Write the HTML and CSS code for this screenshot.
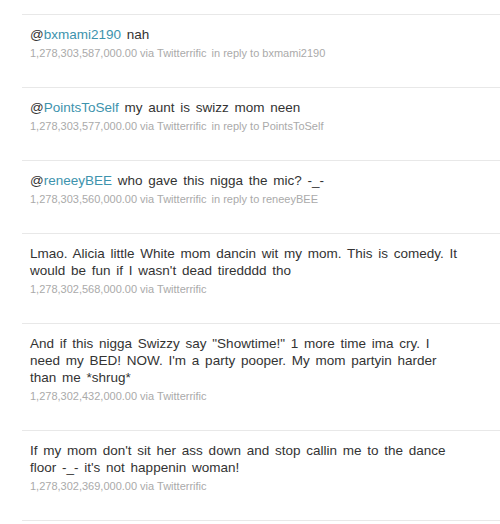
FILE: index.html
```html
<!DOCTYPE html>
<html>
  <head>
    <meta charset="UTF-8" />
    <title>Timeline</title>
    <link rel="stylesheet" href="styles.css">
  </head>
  <body>
    <ol class="timeline">
      <li class="status">
        <p class="text">@<a href="#">bxmami2190</a> nah</p>
        <p class="meta">1,278,303,587,000.00 via Twitterrific <span class="reply">in reply to bxmami2190</span></p>
      </li>
      <li class="status">
        <p class="text">@<a href="#">PointsToSelf</a> my aunt is swizz mom neen</p>
        <p class="meta">1,278,303,577,000.00 via Twitterrific <span class="reply">in reply to PointsToSelf</span></p>
      </li>
      <li class="status">
        <p class="text">@<a href="#">reneeyBEE</a> who gave this nigga the mic? -_-</p>
        <p class="meta">1,278,303,560,000.00 via Twitterrific <span class="reply">in reply to reneeyBEE</span></p>
      </li>
      <li class="status">
        <p class="text">Lmao. Alicia little White mom dancin wit my mom. This is comedy. It would be fun if I wasn't dead tiredddd tho</p>
        <p class="meta">1,278,302,568,000.00 via Twitterrific</p>
      </li>
      <li class="status">
        <p class="text">And if this nigga Swizzy say "Showtime!" 1 more time ima cry. I need my BED! NOW. I'm a party pooper. My mom partyin harder than me *shrug*</p>
        <p class="meta">1,278,302,432,000.00 via Twitterrific</p>
      </li>
      <li class="status">
        <p class="text">If my mom don't sit her ass down and stop callin me to the dance floor -_- it's not happenin woman!</p>
        <p class="meta">1,278,302,369,000.00 via Twitterrific</p>
      </li>
    </ol>
  </body>
</html>
```

FILE: styles.css
```css
body {
  margin: 0;
  background-color: #fff;
  font-family: "Liberation Sans", Arial, sans-serif;
  color: #333;
}

.timeline {
  list-style: none;
  margin: 14px 0 0 22px;
  padding: 0;
  border-top: 1px solid #e8e8e8;
}

.status {
  padding: 11px 40px 27px 8px;
  border-bottom: 1px solid #e8e8e8;
}

.text {
  margin: 0;
  font-size: 13.5px;
  line-height: 17px;
  word-spacing: 2px;
}

.text a {
  color: #3d93ad;
  text-decoration: none;
}

.meta {
  margin: 4px 0 0;
  font-size: 11px;
  line-height: 13px;
  color: #aaa;
}

.reply {
  margin-left: 2px;
}
```
